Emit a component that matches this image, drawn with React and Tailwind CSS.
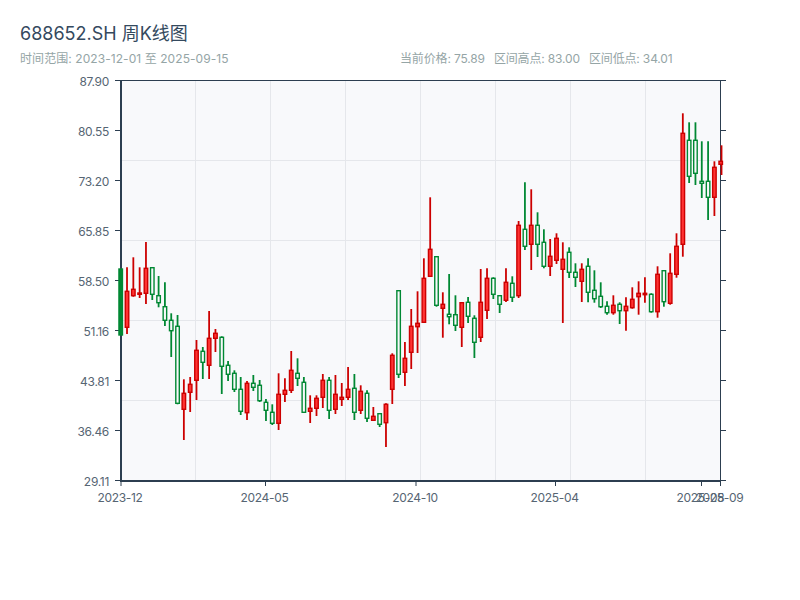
const CANDLES = [
  // [wickTop, wickBottom, bodyTop, bodyBottom, up]
  [269, 335, 269, 335, 0],
  [267.3, 334, 291.3, 327.3, 1],
  [257.3, 296.7, 289.3, 295.7, 1],
  [267.3, 298, 293, 294.3, 1],
  [242, 304, 268.3, 293.3, 1],
  [267.3, 300, 267.7, 294.3, 0],
  [276, 307.3, 295.7, 302.7, 0],
  [282.3, 326, 306.7, 320.3, 0],
  [313.3, 357, 320.3, 330.7, 0],
  [315, 404.3, 326.3, 403.3, 0],
  [379.3, 440, 393.3, 409.3, 1],
  [377, 412, 384.3, 392.3, 1],
  [340, 400, 350.3, 380.3, 1],
  [347, 379, 351.3, 362.3, 0],
  [311, 379, 338.3, 365.3, 1],
  [329, 352, 333.3, 338.3, 1],
  [336.3, 394, 337.3, 366.3, 0],
  [361, 381, 365.3, 374.3, 0],
  [370.3, 392, 373.3, 389.3, 0],
  [377, 415, 389.3, 411.3, 0],
  [381, 420, 383.3, 412.7, 1],
  [375, 391, 383.3, 387.3, 0],
  [380, 402, 385.3, 400.7, 0],
  [399, 421, 402.3, 410.3, 0],
  [404.3, 425, 412.3, 423.3, 0],
  [373.3, 430, 394.3, 423.3, 1],
  [378.3, 402, 390.3, 394.3, 1],
  [351, 393, 370.3, 390.3, 1],
  [358.3, 386, 373.3, 378.3, 0],
  [377, 412.7, 382.3, 412.3, 0],
  [395.3, 423, 408.3, 411.3, 1],
  [395.3, 416, 398.3, 408.3, 1],
  [374, 408, 380.3, 397.3, 1],
  [377, 419, 380.3, 410.3, 0],
  [375, 414, 394.3, 409.3, 1],
  [383, 406, 397.3, 399.3, 1],
  [367, 400, 389.3, 397.3, 1],
  [374, 420, 388.3, 412.3, 0],
  [385.3, 414, 391.3, 410.3, 1],
  [390.3, 422, 393.3, 418.3, 0],
  [407, 421, 416.3, 420.3, 1],
  [413.3, 427, 413.7, 424.3, 0],
  [403.3, 447, 404.3, 422.7, 1],
  [353.3, 404, 355.3, 389.3, 1],
  [290.3, 378, 290.7, 374.3, 0],
  [342, 386, 358.3, 372.3, 1],
  [309, 369, 326.3, 352.3, 1],
  [291.3, 353, 323.3, 326.7, 1],
  [258.3, 322.7, 278.3, 322.3, 1],
  [197.3, 276.7, 249.3, 276.3, 1],
  [256.3, 306.7, 256.7, 305.3, 0],
  [292.3, 337.7, 304.3, 308.3, 1],
  [274, 324.3, 314.3, 316.7, 0],
  [295.3, 331, 314.7, 325.3, 0],
  [302.3, 347, 302.7, 327.3, 1],
  [297, 323, 302.3, 316.3, 0],
  [315.3, 358, 318.3, 342.3, 0],
  [269, 342, 302.3, 337.3, 1],
  [268.3, 319, 278.3, 310.3, 1],
  [277.3, 299, 278.3, 294.3, 0],
  [295.3, 313, 295.7, 304.3, 0],
  [268.3, 302, 282.3, 300.3, 1],
  [276.3, 302, 283.3, 297.3, 0],
  [221, 298, 225.3, 295.7, 1],
  [182.3, 250, 229.3, 246.3, 0],
  [189.3, 270, 225.3, 244.3, 1],
  [212.3, 257, 225.3, 244.3, 0],
  [229.3, 268.3, 242.3, 266.3, 0],
  [239, 276, 256.3, 266.3, 1],
  [233.3, 264, 238.3, 260.3, 1],
  [242.3, 323, 259.3, 269.3, 1],
  [247.3, 278, 252.3, 272.3, 0],
  [263.3, 287, 272.3, 277.3, 0],
  [263.3, 302, 269.3, 281.3, 1],
  [258.3, 302.3, 266.3, 292.3, 0],
  [270.3, 302.7, 290.3, 298.7, 0],
  [282.3, 308, 296.3, 306.7, 0],
  [301.3, 314.7, 306.3, 312.7, 0],
  [295.3, 314.7, 305.3, 312.7, 1],
  [302.3, 324, 304.3, 310.7, 0],
  [297.3, 330.7, 306.3, 310.7, 1],
  [287.3, 308.7, 299.3, 307.7, 1],
  [281.3, 314.7, 293.3, 296.7, 1],
  [277.3, 302.7, 293.3, 294.7, 1],
  [293.3, 312.7, 294.3, 311.7, 0],
  [266.3, 317.7, 274.3, 311.7, 1],
  [270.3, 306.7, 270.7, 301.7, 0],
  [253.3, 304.7, 273.3, 303.3, 1],
  [233.3, 277.7, 246.3, 274.3, 1],
  [113.3, 256.7, 133.3, 244.3, 1],
  [122.3, 183, 140.3, 176.3, 0],
  [122.3, 185, 140.3, 173.3, 0],
  [141.3, 198, 181.3, 183.3, 0],
  [141.3, 220, 181.3, 197.3, 0],
  [161.3, 216, 167.3, 197.3, 1],
  [145.3, 175, 161.3, 164.3, 1],
];

const X_TICKS = [
  { x: 121, label: "2023-12" },
  { x: 265.5, label: "2024-05" },
  { x: 416, label: "2024-10" },
  { x: 555.5, label: "2025-04" },
  { x: 701.5, label: "2025-08" },
  { x: 720.5, label: "2025-09" },
];
const Y_LABELS = ["87.90", "80.55", "73.20", "65.85", "58.50", "51.16", "43.81", "36.46", "29.11"];
const GRID_X = [195.5, 270.5, 345.5, 420.5, 495.5, 570.5, 645.5];
const GRID_Y = [160.5, 240.5, 320.5, 400.5];

const PLOT_BG = "#f8f9fb";

function Chart() {
  return (
    <svg width="800" height="530" viewBox="0 70 800 530" className="block tracking-[-0.3px]">
      <rect x="121" y="81" width="600" height="400" fill={PLOT_BG} />
      {GRID_X.map((x) => (
        <line key={x} x1={x} x2={x} y1="81" y2="481" stroke="#e5e7eb" />
      ))}
      {GRID_Y.map((y) => (
        <line key={y} x1="121" x2="721" y1={y} y2={y} stroke="#e5e7eb" />
      ))}

      {/* axes */}
      <line x1="115" x2="726" y1="80.5" y2="80.5" stroke="#2c3e50" />
      <line x1="120" x2="721" y1="481" y2="481" stroke="#2c3e50" strokeWidth="2" />
      <line x1="121" x2="121" y1="81" y2="482" stroke="#2c3e50" strokeWidth="2" />
      <line x1="720.5" x2="720.5" y1="80" y2="482" stroke="#2c3e50" />
      {Y_LABELS.map((label, i) => {
        const y = 81 + i * 50;
        return (
          <g key={label}>
            <line x1="115" x2="120" y1={y - 0.5} y2={y - 0.5} stroke="#2c3e50" />
            <line x1="721" x2="726" y1={y - 0.5} y2={y - 0.5} stroke="#2c3e50" />
            <text x="109" y={y + 5} textAnchor="end" fontSize="12" fill="#566573">{label}</text>
          </g>
        );
      })}
      {X_TICKS.map((t) => (
        <g key={t.label}>
          <line x1={t.x} x2={t.x} y1="482" y2="486" stroke="#2c3e50" />
          <text x={t.x - 1} y="502" textAnchor="middle" fontSize="12" fill="#566573">{t.label}</text>
        </g>
      ))}

      {/* candles */}
      {CANDLES.map(([wt, wb, bt, bb, up], i) => {
        // last wick sits just right of the axis line
        const x = 120.7 + i * 6.316;
        const wx = i === 95 ? x + 0.8 : x;
        const color = up ? "#cc0000" : "#008833";
        let fill = up ? "#ff3333" : PLOT_BG;
        if (i === 0) fill = color;
        return (
          <g key={i}>
            <line x1={wx} x2={wx} y1={wt} y2={wb} stroke={color} strokeWidth="1.8" />
            <rect
              x={x - 1.75}
              y={bt}
              width="3.5"
              height={Math.max(bb - bt, 0.5)}
              fill={fill}
              stroke={color}
              strokeWidth="1.4"
            />
          </g>
        );
      })}
    </svg>
  );
}

export default function App() {
  return (
    <div className="w-[800px] h-[600px] bg-white overflow-hidden font-['Inter','Noto_Sans_CJK_SC',sans-serif]">
      <div className="pt-6 pl-5 h-[70px]">
        <h1 className="text-lg leading-5 font-normal text-[#34495e]">688652.SH 周K线图</h1>
        <div className="mt-[7px] flex text-xs text-[#95a5a6]">
          <div className="w-[380px] tracking-[0.07px]">时间范围: 2023-12-01 至 2025-09-15</div>
          <div className="flex gap-[9px] tracking-[-0.15px]">
            <span>当前价格: 75.89</span>
            <span>区间高点: 83.00</span>
            <span>区间低点: 34.01</span>
          </div>
        </div>
      </div>
      <Chart />
    </div>
  );
}
